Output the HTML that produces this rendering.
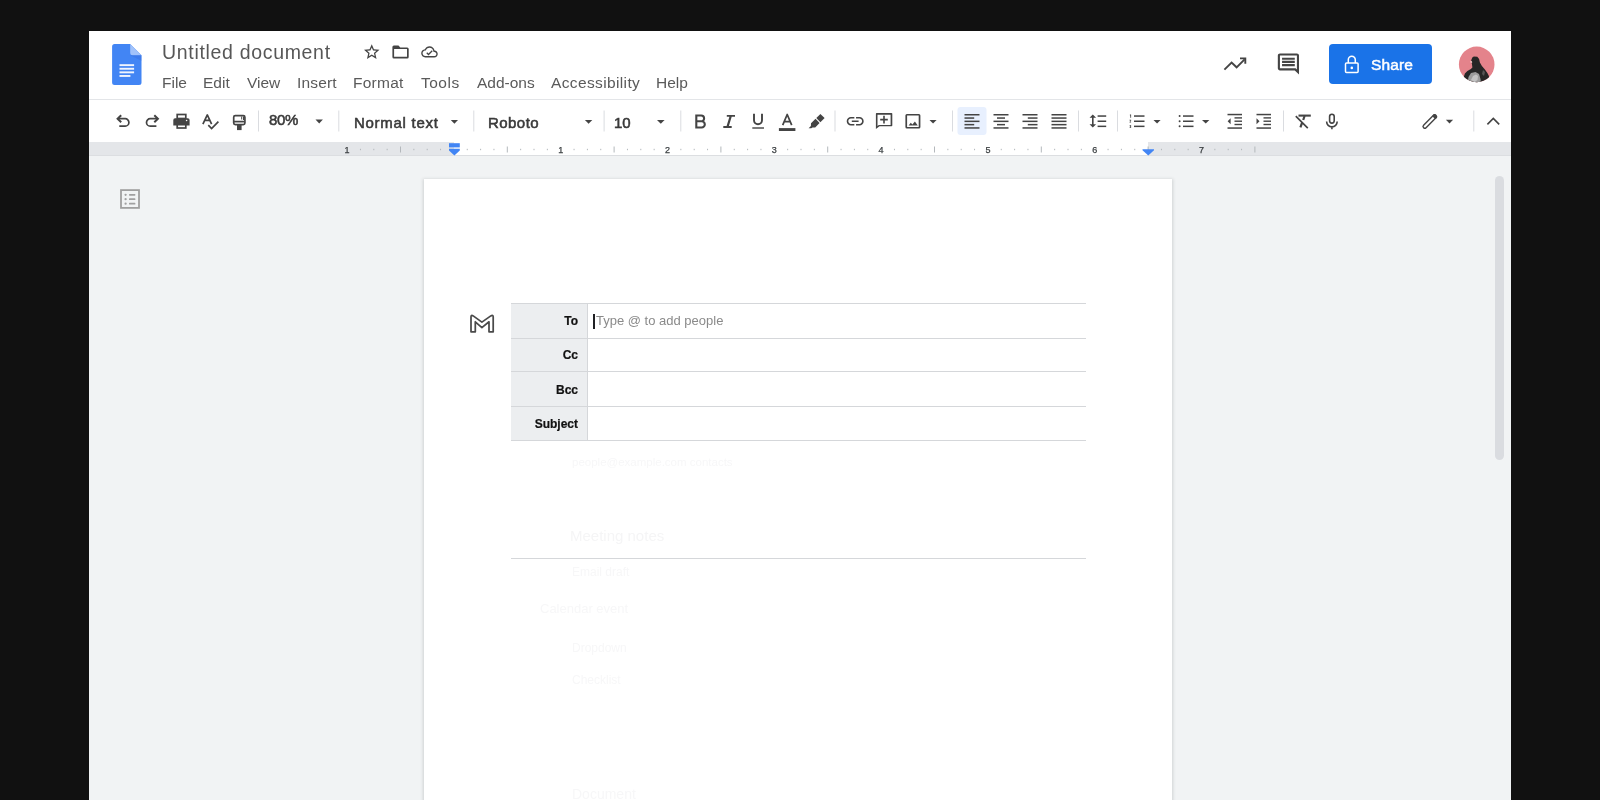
<!DOCTYPE html>
<html><head><meta charset="utf-8">
<style>
html,body{margin:0;padding:0;width:1600px;height:800px;overflow:hidden;background:#111111;}
*{box-sizing:border-box;}
body{font-family:"Liberation Sans",sans-serif;position:relative;}
.a{position:absolute;white-space:nowrap;will-change:transform;}
#win{position:absolute;left:89px;top:31px;width:1422px;height:769px;background:#fff;overflow:hidden;}
#canvas{position:absolute;left:89px;top:156px;width:1422px;height:644px;background:#f1f3f4;}
#hdrline{position:absolute;left:89px;top:99px;width:1422px;height:1px;background:#e3e5e8;}
#ruler{position:absolute;left:89px;top:142px;width:1422px;height:13px;background:#e4e6e9;}
#rulerline{position:absolute;left:89px;top:155px;width:1422px;height:1px;background:#dcdee1;}
#rwhite{position:absolute;left:454px;top:142px;width:694px;height:13px;background:#fff;}
#page{position:absolute;left:424px;top:179px;width:748px;height:640px;background:#fff;box-shadow:0 1px 3px 1px rgba(60,64,67,.18);}
.title{left:162px;top:41px;font-size:19.5px;color:#575757;letter-spacing:0.68px;}
.menu{top:73.5px;font-size:15.5px;color:#5a5a5a;}
.tb{top:113px;font-size:14.5px;color:#3a3a3a;font-weight:normal;-webkit-text-stroke:0.55px #3a3a3a;}
.lbl{font-size:12px;font-weight:bold;color:#111;-webkit-text-stroke:0.2px #111;text-align:right;width:70px;left:508px;}
</style></head><body>
<div id="win"></div>
<div id="hdrline"></div>
<div id="canvas"></div>
<div id="ruler"></div>
<div id="rwhite"></div>
<div id="rulerline"></div>
<div id="page"></div>

<!-- header text -->
<div class="a title">Untitled document</div>
<div class="a menu" style="left:161.5px">File</div>
<div class="a menu" style="left:203px">Edit</div>
<div class="a menu" style="left:247px">View</div>
<div class="a menu" style="left:297px;letter-spacing:0.15px">Insert</div>
<div class="a menu" style="left:353px;letter-spacing:0.25px">Format</div>
<div class="a menu" style="left:421px;letter-spacing:0.5px">Tools</div>
<div class="a menu" style="left:477px">Add-ons</div>
<div class="a menu" style="left:551px;letter-spacing:0.37px">Accessibility</div>
<div class="a menu" style="left:656px">Help</div>

<!-- toolbar text -->
<div class="a tb" style="left:268.5px;top:110.5px;font-size:15px;letter-spacing:-0.3px">80%</div>
<div class="a tb" style="left:353.5px;top:114px;font-size:15px;letter-spacing:0.72px">Normal text</div>
<div class="a tb" style="left:488px;top:114px;font-size:15px;letter-spacing:0.45px">Roboto</div>
<div class="a tb" style="left:614px;top:114px;font-size:15px">10</div>

<!-- share button -->
<div class="a" style="left:1329px;top:44px;width:103px;height:40px;background:#1a73e8;border-radius:4px;"></div>
<div class="a" style="left:1371px;top:55.5px;font-size:15.5px;color:#fff;-webkit-text-stroke:0.5px #fff;letter-spacing:0.1px">Share</div>

<!-- table -->
<div class="a" style="left:511px;top:303px;width:76px;height:137px;background:#eceef0;"></div>
<div class="a" style="left:511px;top:303px;width:575px;height:1px;background:#d5d7da;"></div>
<div class="a" style="left:511px;top:338px;width:575px;height:1px;background:#d5d7da;"></div>
<div class="a" style="left:511px;top:371px;width:575px;height:1px;background:#d5d7da;"></div>
<div class="a" style="left:511px;top:406px;width:575px;height:1px;background:#d5d7da;"></div>
<div class="a" style="left:511px;top:440px;width:575px;height:1px;background:#d5d7da;"></div>
<div class="a" style="left:587px;top:303px;width:1px;height:137px;background:#d5d7da;"></div>
<div class="a" style="left:511px;top:558px;width:575px;height:1px;background:#d5d7da;"></div>
<div class="a lbl" style="top:314px">To</div>
<div class="a lbl" style="top:348px">Cc</div>
<div class="a lbl" style="top:382.5px">Bcc</div>
<div class="a lbl" style="top:416.5px">Subject</div>
<div class="a" style="left:593px;top:314px;width:2px;height:15px;background:#202124;"></div>
<div class="a" style="left:596px;top:312.5px;font-size:13px;color:#8a8a8a;">Type @ to add people</div>


<!-- ghost frame remnants -->
<div class="a" style="filter:blur(0.7px);left:572px;top:456px;font-size:11.5px;color:#f7f7f8;">people@example.com contacts</div>
<div class="a" style="filter:blur(0.7px);left:570px;top:527px;font-size:15px;color:#f5f5f6;">Meeting notes</div>
<div class="a" style="filter:blur(0.7px);left:572px;top:565px;font-size:12px;color:#f7f7f8;">Email draft</div>
<div class="a" style="filter:blur(0.7px);left:540px;top:601px;font-size:13px;color:#f7f7f8;">Calendar event</div>
<div class="a" style="filter:blur(0.7px);left:572px;top:641px;font-size:12px;color:#f7f7f8;">Dropdown</div>
<div class="a" style="filter:blur(0.7px);left:572px;top:673px;font-size:12px;color:#f7f7f8;">Checklist</div>
<div class="a" style="filter:blur(0.7px);left:572px;top:786px;font-size:14px;color:#f7f7f8;">Document</div>

<!-- scrollbar -->
<div class="a" style="left:1494.5px;top:176px;width:9px;height:284px;background:#dadce0;border-radius:4.5px;"></div>

<svg class="a" style="left:0;top:0" width="1600" height="800" viewBox="0 0 1600 800" id="icons">

<g fill="none" stroke="#444" stroke-width="1.7" stroke-linecap="butt" stroke-linejoin="miter">
 <!-- undo -->
 <path d="M118 118.7 H125.2 A3.7 3.7 0 0 1 125.2 126.1 H119.3"/>
 <path d="M121.2 115.2 L117.6 118.7 L121.2 122.2" stroke-width="2"/>
 <!-- redo -->
 <path d="M157.5 118.7 H150.2 A3.7 3.7 0 0 0 150.2 126.1 H156.4"/>
 <path d="M154.3 115.2 L157.9 118.7 L154.3 122.2" stroke-width="2"/>
 <!-- print paper top/bottom -->
 <rect x="177.2" y="114.5" width="8.6" height="4" />
 <rect x="177.2" y="123.4" width="8.6" height="4.6" fill="#fff"/>
 <!-- spellcheck -->
 <path d="M202.9 124.2 L207.3 114.9 L211.6 124.2 M204.6 120.4 H210" stroke-linejoin="round"/>
 <path d="M208.3 125.2 L211.6 128.5 L218.4 121.7"/>
 <!-- paint format -->
 <rect x="233.7" y="115.7" width="11.2" height="9" rx="1.6"/>
 <path d="M234 121.6 H244.5"/>
</g>
<g fill="#444">
 <!-- printer body -->
 <path d="M173.3 120 a1.8 1.8 0 0 1 1.8 -1.8 h12.7 a1.8 1.8 0 0 1 1.8 1.8 v5.5 h-16.3z"/>
 <circle cx="186.6" cy="120.5" r="0.8" fill="#fff"/>
 <!-- paint handle -->
 <rect x="237" y="124.6" width="4.6" height="5.5"/>
 <path d="M241.2 116.5 v3 h1 v-3z M243 116.5 v3.5 h1 v-3.5z"/>
</g>

<g fill="#444">
 <!-- dropdown arrows -->
 <path d="M315.5 119.5 h7.4 l-3.7 3.9z"/>
 <path d="M450.8 120 h7.2 l-3.6 3.8z"/>
 <path d="M584.9 120 h7.4 l-3.7 3.8z"/>
 <path d="M657 120 h7.6 l-3.8 3.8z"/>
 <path d="M929.5 119.9 h7.1 l-3.55 3.5z"/>
 <path d="M1153.5 120 h7.1 l-3.55 3.6z"/>
 <path d="M1202 120 h7.4 l-3.7 3.6z"/>
 <path d="M1445.9 119.7 h7.2 l-3.6 3.8z"/>
</g>
<g fill="#dadce0">
 <rect x="258" y="110.5" width="1" height="21"/>
 <rect x="338.3" y="110.5" width="1" height="21"/>
 <rect x="473.3" y="110.5" width="1" height="21"/>
 <rect x="603.6" y="110.5" width="1" height="21"/>
 <rect x="680.3" y="110.5" width="1" height="21"/>
 <rect x="834.5" y="110.5" width="1" height="21"/>
 <rect x="952" y="110.5" width="1" height="21"/>
 <rect x="1078" y="110.5" width="1" height="21"/>
 <rect x="1117" y="110.5" width="1" height="21"/>
 <rect x="1283" y="110.5" width="1" height="21"/>
 <rect x="1473.3" y="110.5" width="1" height="21"/>
</g>
<!-- align highlight -->
<rect x="957.5" y="107" width="29" height="28" rx="3" fill="#e8f0fe"/>
<g fill="none" stroke="#444" stroke-width="2">
 <!-- B -->
 <path d="M696.3 115.5 H701.2 a2.9 2.9 0 0 1 0 5.8 H696.3 Z M696.3 121.3 H701.7 a3.1 3.1 0 0 1 0 6.2 H696.3 Z" stroke-width="2.1"/>
 <!-- U -->
 <path d="M754 113.8 V120.3 a4 4 0 0 0 8 0 V113.8" stroke-width="1.9"/>
</g>
<g fill="#444">
 <!-- I -->
 <path d="M726.8 114.9 H735 V116.7 H731.7 L728.9 126.1 H731.7 V127.9 H723.3 V126.1 H726.6 L729.4 116.7 H726.8z"/>
 <!-- U underline -->
 <rect x="752.3" y="127.3" width="11.7" height="1.4"/>
 <!-- A bar -->
 <rect x="778.9" y="128.1" width="16.5" height="2.9"/>
 <!-- highlighter -->
 <path d="M820.4 113.9 L824.6 118 L820.4 122.2 L816.3 118 Z"/>
 <path d="M815.5 118.8 L819.6 123 L815.2 127.4 L812.5 127.4 L811.3 128.3 L808.6 128.3 L810.9 125.9 L811 123.3 Z"/>
</g>
<g fill="none" stroke="#444" stroke-width="1.6">
 <!-- A glyph -->
 <path d="M782.7 125.1 L787.2 114.5 L791.7 125.1 M784.4 121.6 H790" stroke-width="1.75" stroke-linejoin="round"/>
</g>

<g fill="#444">
 <!-- link (material link scaled .85) -->
 <path transform="translate(845 111.05) scale(0.85)" d="M3.9 12c0-1.71 1.39-3.1 3.1-3.1h4V7H7c-2.76 0-5 2.24-5 5s2.24 5 5 5h4v-1.9H7c-1.71 0-3.1-1.39-3.1-3.1zM8 13h8v-2H8v2zm9-6h-4v1.9h4c1.71 0 3.1 1.39 3.1 3.1s-1.39 3.1-3.1 3.1h-4V17h4c2.76 0 5-2.24 5-5s-2.24-5-5-5z"/>
 <!-- add comment -->
 <path d="M876.6 113 h14.9 a0.8 0.8 0 0 1 0.8 0.8 v11.6 a0.8 0.8 0 0 1 -0.8 0.8 h-12 l-3.6 2.7 v-15.1 a0.8 0.8 0 0 1 0.7 -0.8z M877.5 114.7 v11.3 l1.3 -1.1 h11.8 v-10.2z"/>
 <path d="M883.2 115.8 h1.6 v3 h3 v1.6 h-3 v3 h-1.6 v-3 h-3 v-1.6 h3z"/>
 <!-- image -->
 <path d="M906.9 113.9 h12 a1.5 1.5 0 0 1 1.5 1.5 v11.7 a1.5 1.5 0 0 1 -1.5 1.5 h-12 a1.5 1.5 0 0 1 -1.5 -1.5 v-11.7 a1.5 1.5 0 0 1 1.5 -1.5z M907.1 115.6 v11.3 h11.6 v-11.3z"/>
 <path d="M908.6 125.6 l2.2 -2.9 l1.6 1.9 l2.5 -3.2 l2.9 4.2z"/>
 <!-- align left -->
 <rect x="964.5" y="114" width="15" height="1.5"/><rect x="964.5" y="117.3" width="9.7" height="1.5"/><rect x="964.5" y="120.6" width="15" height="1.5"/><rect x="964.5" y="123.9" width="9.7" height="1.5"/><rect x="964.5" y="127.2" width="15" height="1.5"/>
 <!-- align center -->
 <rect x="993.5" y="114" width="15" height="1.5"/><rect x="997" y="117.3" width="8" height="1.5"/><rect x="993.5" y="120.6" width="15" height="1.5"/><rect x="997" y="123.9" width="8" height="1.5"/><rect x="993.5" y="127.2" width="15" height="1.5"/>
 <!-- align right -->
 <rect x="1022.5" y="114" width="15" height="1.5"/><rect x="1027.8" y="117.3" width="9.7" height="1.5"/><rect x="1022.5" y="120.6" width="15" height="1.5"/><rect x="1027.8" y="123.9" width="9.7" height="1.5"/><rect x="1022.5" y="127.2" width="15" height="1.5"/>
 <!-- justify -->
 <rect x="1051.5" y="114" width="15" height="1.5"/><rect x="1051.5" y="117.3" width="15" height="1.5"/><rect x="1051.5" y="120.6" width="15" height="1.5"/><rect x="1051.5" y="123.9" width="15" height="1.5"/><rect x="1051.5" y="127.2" width="15" height="1.5"/>
 <!-- line spacing -->
 <path d="M1092.8 114.4 l3.3 3.3 h-2.5 v6.6 h2.5 l-3.3 3.3 l-3.3 -3.3 h2.5 v-6.6 h-2.5z"/>
 <rect x="1097.6" y="115.3" width="8.6" height="1.5"/><rect x="1097.6" y="120.5" width="8.6" height="1.5"/><rect x="1097.6" y="125.6" width="8.6" height="1.5"/>
 <!-- numbered list -->
 <rect x="1134" y="115.3" width="10.5" height="1.5"/><rect x="1134" y="120.5" width="10.5" height="1.5"/><rect x="1134" y="125.6" width="10.5" height="1.5"/>
 <path d="M1129.9 114.6 h1.2 v3.2 h-0.8 v-2.4 h-0.4z" />
 <path d="M1129.5 119.8 h1.6 v1.2 l-0.9 0.9 h0.9 v0.6 h-1.6 v-0.6 l0.9 -1 v-0.5 h-0.9z"/>
 <path d="M1129.5 124.9 h1.6 v3.1 h-1.6 v-0.6 h0.9 v-0.6 h-0.6 v-0.5 h0.6 v-0.8 h-0.9z"/>
 <!-- bullet list -->
 <circle cx="1179.6" cy="116" r="1"/><circle cx="1179.6" cy="121.2" r="1"/><circle cx="1179.6" cy="126.3" r="1"/>
 <rect x="1183" y="115.3" width="10.5" height="1.5"/><rect x="1183" y="120.5" width="10.5" height="1.5"/><rect x="1183" y="125.6" width="10.5" height="1.5"/>
 <!-- decrease indent -->
 <rect x="1227.5" y="113.8" width="14.5" height="1.5"/><rect x="1234.5" y="117.2" width="7.5" height="1.4"/><rect x="1234.5" y="120.5" width="7.5" height="1.4"/><rect x="1234.5" y="123.8" width="7.5" height="1.4"/><rect x="1227.5" y="127.3" width="14.5" height="1.5"/>
 <path d="M1230.6 118.3 v6 l-3 -3z"/>
 <!-- increase indent -->
 <rect x="1256.5" y="113.8" width="14.5" height="1.5"/><rect x="1263.5" y="117.2" width="7.5" height="1.4"/><rect x="1263.5" y="120.5" width="7.5" height="1.4"/><rect x="1263.5" y="123.8" width="7.5" height="1.4"/><rect x="1256.5" y="127.3" width="14.5" height="1.5"/>
 <path d="M1256.5 118.3 v6 l3 -3z"/>
</g>
<g fill="none" stroke="#444" stroke-width="1.8">
 <!-- clear formatting -->
 <path d="M1298.5 115.6 H1310.8" stroke-width="2.1"/>
 <path d="M1304.6 116 L1303.2 120" stroke-width="2.2"/>
 <path d="M1302.2 122.5 L1300.4 127.4" stroke-width="2.2"/>
 <path d="M1295.8 116.2 L1307.8 128.2" stroke-width="1.7"/>
 <!-- mic -->
 <rect x="1329.6" y="114.3" width="4.6" height="8.8" rx="2.3" stroke-width="1.6"/>
 <path d="M1326.6 121.6 a5.3 5.3 0 0 0 10.6 0 M1331.9 126.8 V129.2" stroke-width="1.6"/>
 <!-- caret -->
 <path d="M1487.4 124.4 L1493.3 118.5 L1499.2 124.4" stroke-width="1.6"/>
</g>
<g fill="#444">
 <!-- pencil -->
 <g transform="translate(1429.7 121.6) rotate(-45)"><rect x="-8.6" y="-1.75" width="17.4" height="3.5" rx="1.7" fill="none" stroke="#444" stroke-width="1.4"/><rect x="5.6" y="-2.4" width="3.6" height="4.8" rx="1.6" fill="#444"/></g>
</g>

<!-- ruler marks -->
<g fill="#b4b8bc">
<rect x="359.95" y="148.8" width="1" height="1.4"/>
<rect x="373.30" y="148.8" width="1" height="1.4"/>
<rect x="386.65" y="148.8" width="1" height="1.4"/>
<rect x="400.00" y="146.5" width="1" height="6"/>
<rect x="413.35" y="148.8" width="1" height="1.4"/>
<rect x="426.70" y="148.8" width="1" height="1.4"/>
<rect x="440.05" y="148.8" width="1" height="1.4"/>
<rect x="466.75" y="148.8" width="1" height="1.4"/>
<rect x="480.10" y="148.8" width="1" height="1.4"/>
<rect x="493.45" y="148.8" width="1" height="1.4"/>
<rect x="506.80" y="146.5" width="1" height="6"/>
<rect x="520.15" y="148.8" width="1" height="1.4"/>
<rect x="533.50" y="148.8" width="1" height="1.4"/>
<rect x="546.85" y="148.8" width="1" height="1.4"/>
<rect x="573.55" y="148.8" width="1" height="1.4"/>
<rect x="586.90" y="148.8" width="1" height="1.4"/>
<rect x="600.25" y="148.8" width="1" height="1.4"/>
<rect x="613.60" y="146.5" width="1" height="6"/>
<rect x="626.95" y="148.8" width="1" height="1.4"/>
<rect x="640.30" y="148.8" width="1" height="1.4"/>
<rect x="653.65" y="148.8" width="1" height="1.4"/>
<rect x="680.35" y="148.8" width="1" height="1.4"/>
<rect x="693.70" y="148.8" width="1" height="1.4"/>
<rect x="707.05" y="148.8" width="1" height="1.4"/>
<rect x="720.40" y="146.5" width="1" height="6"/>
<rect x="733.75" y="148.8" width="1" height="1.4"/>
<rect x="747.10" y="148.8" width="1" height="1.4"/>
<rect x="760.45" y="148.8" width="1" height="1.4"/>
<rect x="787.15" y="148.8" width="1" height="1.4"/>
<rect x="800.50" y="148.8" width="1" height="1.4"/>
<rect x="813.85" y="148.8" width="1" height="1.4"/>
<rect x="827.20" y="146.5" width="1" height="6"/>
<rect x="840.55" y="148.8" width="1" height="1.4"/>
<rect x="853.90" y="148.8" width="1" height="1.4"/>
<rect x="867.25" y="148.8" width="1" height="1.4"/>
<rect x="893.95" y="148.8" width="1" height="1.4"/>
<rect x="907.30" y="148.8" width="1" height="1.4"/>
<rect x="920.65" y="148.8" width="1" height="1.4"/>
<rect x="934.00" y="146.5" width="1" height="6"/>
<rect x="947.35" y="148.8" width="1" height="1.4"/>
<rect x="960.70" y="148.8" width="1" height="1.4"/>
<rect x="974.05" y="148.8" width="1" height="1.4"/>
<rect x="1000.75" y="148.8" width="1" height="1.4"/>
<rect x="1014.10" y="148.8" width="1" height="1.4"/>
<rect x="1027.45" y="148.8" width="1" height="1.4"/>
<rect x="1040.80" y="146.5" width="1" height="6"/>
<rect x="1054.15" y="148.8" width="1" height="1.4"/>
<rect x="1067.50" y="148.8" width="1" height="1.4"/>
<rect x="1080.85" y="148.8" width="1" height="1.4"/>
<rect x="1107.55" y="148.8" width="1" height="1.4"/>
<rect x="1120.90" y="148.8" width="1" height="1.4"/>
<rect x="1134.25" y="148.8" width="1" height="1.4"/>
<rect x="1147.60" y="146.5" width="1" height="6"/>
<rect x="1160.95" y="148.8" width="1" height="1.4"/>
<rect x="1174.30" y="148.8" width="1" height="1.4"/>
<rect x="1187.65" y="148.8" width="1" height="1.4"/>
<rect x="1214.35" y="148.8" width="1" height="1.4"/>
<rect x="1227.70" y="148.8" width="1" height="1.4"/>
<rect x="1241.05" y="148.8" width="1" height="1.4"/>
<rect x="1254.40" y="146.5" width="1" height="6"/>
</g>
<g fill="#3c4043" stroke="#3c4043" stroke-width="0.25" font-family="Liberation Sans" font-size="9" text-anchor="middle">
<text x="347.10" y="153">1</text>
<text x="560.70" y="153">1</text>
<text x="667.50" y="153">2</text>
<text x="774.30" y="153">3</text>
<text x="881.10" y="153">4</text>
<text x="987.90" y="153">5</text>
<text x="1094.70" y="153">6</text>
<text x="1201.50" y="153">7</text>
</g>
<g fill="#4285f4">
 <rect x="449" y="143.2" width="10.8" height="4.2"/>
 <path d="M449 148.8 h10.8 v1.7 l-5.4 5.1 l-5.4 -5.1z"/>
 <path d="M1142.5 149.2 h11.5 v1 l-5.75 5.3 l-5.75 -5.3z"/>
</g>
<!-- docs logo -->
<path d="M114.6 44 h15.6 l11.3 11.3 v27.3 a2.5 2.5 0 0 1 -2.5 2.5 h-24.4 a2.5 2.5 0 0 1 -2.5 -2.5 v-36.1 a2.5 2.5 0 0 1 2.5 -2.5z" fill="#4285f4"/>
<path d="M130.2 44 l11.3 11.3 h-8.8 a2.5 2.5 0 0 1 -2.5 -2.5z" fill="#a1c2fa"/>
<path d="M130.2 55.3 l11.3 0 v5.5z" fill="#3367d6" opacity="0.35"/>
<g fill="#fff" opacity="0.92">
 <rect x="119.5" y="64.2" width="14.6" height="1.9"/>
 <rect x="119.5" y="67.8" width="14.6" height="1.9"/>
 <rect x="119.5" y="71.4" width="14.6" height="1.9"/>
 <rect x="119.5" y="75" width="10.9" height="1.9"/>
</g>
<g fill="#444">
 <!-- star -->
 <path transform="translate(362.45 42.65) scale(0.775)" d="M22 9.24l-7.19-.62L12 2 9.19 8.63 2 9.24l5.46 4.73L5.82 21 12 17.27 18.18 21l-1.63-7.03L22 9.24zM12 15.4l-3.76 2.27 1-4.28-3.32-2.88 4.38-.38L12 6.1l1.71 4.04 4.38.38-3.32 2.88 1 4.28L12 15.4z"/>
 <!-- folder -->
 <path d="M393.9 45.6 h4.6 l1.8 1.8 h6.9 a1.5 1.5 0 0 1 1.5 1.5 v8.1 a1.5 1.5 0 0 1 -1.5 1.5 h-13.3 a1.5 1.5 0 0 1 -1.5 -1.5 v-9.9 a1.5 1.5 0 0 1 1.5 -1.5z M394.1 49.1 v7.7 h12.9 v-7.7z"/>
 <!-- cloud done -->
 <path transform="translate(421.2 43.6) scale(0.69)" d="M19.35 10.04C18.67 6.59 15.64 4 12 4 9.11 4 6.6 5.64 5.35 8.04 2.34 8.36 0 10.91 0 14c0 3.31 2.69 6 6 6h13c2.76 0 5-2.24 5-5 0-2.64-2.05-4.78-4.65-4.96zM19 18H6c-2.21 0-4-1.79-4-4 0-2.05 1.53-3.76 3.56-3.97l1.07-.11.5-.95C8.08 7.14 9.94 6 12 6c2.62 0 4.88 1.86 5.39 4.43l.3 1.5 1.530.11c1.56.1 2.78 1.41 2.78 2.96 0 1.65-1.35 3-3 3z"/>
 <path d="M427.2 52.3 l1.3 1.3 l3.3 -3.3 l0.9 0.9 l-4.2 4.2 l-2.2 -2.2z"/>
 <!-- comment -->
 <path transform="translate(1275.7 51.3) scale(1.06)" d="M21.99 4c0-1.1-.89-2-1.99-2H4c-1.1 0-2 .9-2 2v12c0 1.1.9 2 2 2h14l4 4-.01-18zM20 4v13.17L18.83 16H4V4h16zM6 12h12v2H6zm0-3h12v2H6zm0-3h12v2H6z"/>
</g>
<g fill="none" stroke="#444" stroke-width="1.9" stroke-linejoin="miter">
 <path d="M1224.4 69.7 L1231.6 62.5 L1236.6 67.3 L1244.6 59.3"/>
 <path d="M1240 58.4 H1245.3 V63.7"/>
</g>
<!-- lock -->
<g fill="none" stroke="#fff" stroke-width="1.5">
 <path d="M1348.3 63 V59.8 a3.5 3.5 0 0 1 7 0 V63"/>
 <rect x="1345.5" y="63" width="12.6" height="9.6" rx="1"/>
</g>
<circle cx="1351.8" cy="67.9" r="1.3" fill="#fff"/>
<!-- avatar -->
<defs><clipPath id="av"><circle cx="1476.7" cy="64.4" r="17.8"/></clipPath></defs>
<circle cx="1476.7" cy="64.4" r="17.8" fill="#e4838b"/>
<g clip-path="url(#av)">
 <path d="M1472.3 57.5 l1.5 -1 l3.5 0.3 l1.8 2.2 l0.8 3.5 l2 3.5 l3 3.5 l2.5 3.5 l1.5 3 l1 8 h-28 l1.5 -6 l1.5 -4.5 l2.5 -2.5 l3.5 -2 l1.5 -1.5 l-0.5 -3.5 l-0.8 -3.5z" fill="#262626"/>
 <path d="M1467.5 84 l1 -7 l2.5 -4 l4.5 -1 l3.5 2 l1.5 5 l0.5 5z" fill="#9c9c9c"/>
 <path d="M1471 80 l2 -4 l3 -1.5 l2 1.5 l-0.5 4 l-3 2z" fill="#c4c4c4"/>
 <path d="M1470 61.5 l1.5 -0.8 l0.8 1.5 l-1.2 1z" fill="#f0c0c0"/>
 <path d="M1483 70 l2 2 l-1 4 l-2 -2z" fill="#555"/>
</g>
<!-- outline icon -->
<rect x="121" y="190.1" width="18" height="17.8" fill="none" stroke="#a0a0a0" stroke-width="1.8"/>
<g fill="#a0a0a0">
 <circle cx="125.6" cy="194.8" r="1.15"/><rect x="129" y="193.9" width="6.4" height="1.8" rx="0.6"/>
 <circle cx="125.6" cy="199.2" r="1.15"/><rect x="129" y="198.3" width="6.4" height="1.8" rx="0.6"/>
 <circle cx="125.6" cy="203.7" r="1.15"/><rect x="129" y="202.8" width="6.4" height="1.8" rx="0.6"/>
</g>
<!-- gmail M -->
<path d="M471 331.8 V317 Q471 314.6 473.2 315.9 L481.9 322.1 L490.8 315.9 Q493.2 314.6 493.2 317 V331.8 H489 V321.8 L481.9 327.6 L475.3 321.8 V331.8 Z" fill="none" stroke="#4a4a4a" stroke-width="1.75" stroke-linejoin="round"/>
</svg>
</body></html>
